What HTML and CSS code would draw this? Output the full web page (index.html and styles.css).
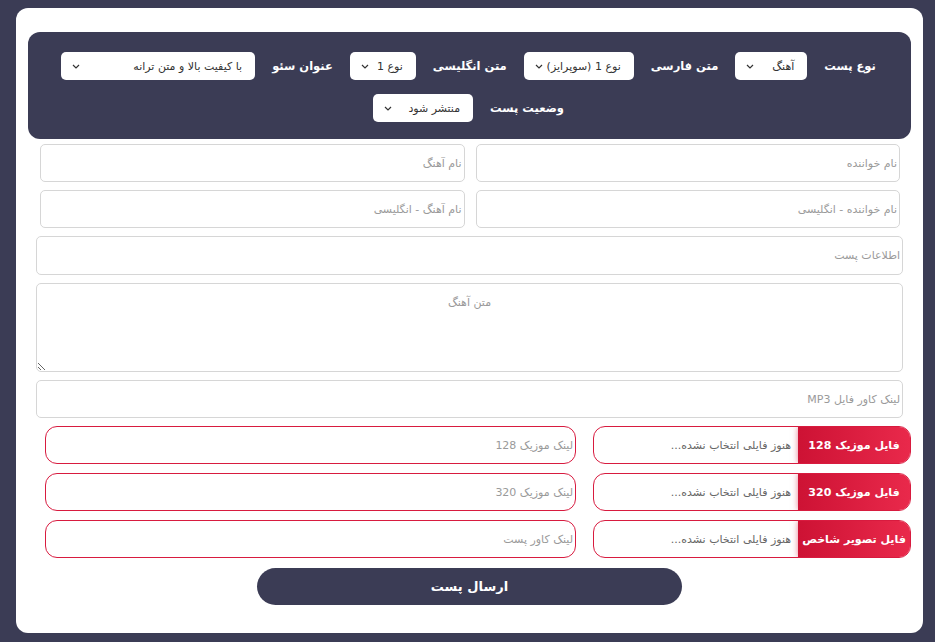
FILE: index.html
```html
<!DOCTYPE html>
<html lang="fa" dir="rtl">
<head>
    <meta charset="utf-8">
    <title>ارسال پست جدید</title>
    <link rel="stylesheet" href="styles.css">
</head>
<body>
    <div class="card">
        <!-- Post options -->
        <div class="options">
            <div class="options-row">
                <span class="opt-label">نوع پست</span>
                <div class="select w-72"><span>آهنگ</span><svg viewBox="0 0 8 5"><path d="M1 1l3 3 3-3"/></svg></div>
                <span class="opt-label">متن فارسی</span>
                <div class="select w-110"><span>نوع 1 (سوپرایز)</span><svg viewBox="0 0 8 5"><path d="M1 1l3 3 3-3"/></svg></div>
                <span class="opt-label">متن انگلیسی</span>
                <div class="select w-66"><span>نوع 1</span><svg viewBox="0 0 8 5"><path d="M1 1l3 3 3-3"/></svg></div>
                <span class="opt-label">عنوان سئو</span>
                <div class="select w-194"><span>با کیفیت بالا و متن ترانه</span><svg viewBox="0 0 8 5"><path d="M1 1l3 3 3-3"/></svg></div>
            </div>
            <div class="options-row">
                <span class="opt-label">وضعیت پست</span>
                <div class="select w-100"><span>منتشر شود</span><svg viewBox="0 0 8 5"><path d="M1 1l3 3 3-3"/></svg></div>
            </div>
        </div>

        <!-- Text fields -->
        <div class="pair">
            <input type="text" placeholder="نام خواننده">
            <input type="text" placeholder="نام آهنگ">
        </div>
        <div class="pair">
            <input type="text" placeholder="نام خواننده - انگلیسی">
            <input type="text" placeholder="نام آهنگ - انگلیسی">
        </div>
        <div class="full">
            <input type="text" class="tall" placeholder="اطلاعات پست">
            <textarea placeholder="متن آهنگ"></textarea>
            <input type="text" placeholder="لینک کاور فایل MP3">
        </div>

        <!-- Files -->
        <div class="files">
            <div class="file-field">
                <span class="file-btn">فایل موزیک 128</span>
                <span class="file-name">هنوز فایلی انتخاب نشده...</span>
            </div>
            <input type="text" class="link" placeholder="لینک موزیک 128">

            <div class="file-field">
                <span class="file-btn">فایل موزیک 320</span>
                <span class="file-name">هنوز فایلی انتخاب نشده...</span>
            </div>
            <input type="text" class="link" placeholder="لینک موزیک 320">

            <div class="file-field">
                <span class="file-btn">فایل تصویر شاخص</span>
                <span class="file-name">هنوز فایلی انتخاب نشده...</span>
            </div>
            <input type="text" class="link" placeholder="لینک کاور پست">
        </div>

        <button type="submit" class="submit">ارسال پست</button>
    </div>
</body>
</html>
```

FILE: styles.css
```css
body {
    font-family: "DejaVu Sans", sans-serif;
    margin: 0;
    padding: 8px 12px 0 16px;
    background-color: #3b3c55;
    direction: rtl;
}

.card {
    background-color: white;
    border-radius: 12px;
    padding: 24px 12px 28px;
}

/* header with selects */
.options {
    background-color: #3b3c55;
    border-radius: 12px;
    padding: 20px 0 17px;
    display: flex;
    flex-direction: column;
    gap: 14px;
}

.options-row {
    display: flex;
    justify-content: center;
    align-items: center;
    gap: 15px;
}

.opt-label {
    color: white;
    font-size: 11.5px;
    font-weight: bold;
    margin: 0 2px;
}

.select {
    height: 28px;
    background-color: white;
    border-radius: 5px;
    display: flex;
    align-items: center;
    justify-content: space-between;
    padding: 0 13px 0 11px;
    box-sizing: border-box;
    font-size: 11px;
    color: #333;
}

.select svg {
    width: 8px;
    height: 5px;
    fill: none;
    stroke: #333;
    stroke-width: 1.2;
}

.w-72 { width: 72px; }
.w-110 { width: 110px; }
.w-66 { width: 66px; }
.w-194 { width: 194px; }
.w-100 { width: 100px; }

/* text inputs */
input[type="text"],
textarea {
    font-family: inherit;
    font-size: 11px;
    border: 1px solid #d6d6d6;
    border-radius: 5px;
    padding: 0 2px;
    box-sizing: border-box;
    height: 38px;
    width: 100%;
    margin: 0;
    color: #333;
    background: white;
}

input::placeholder,
textarea::placeholder {
    color: #9a9a9a;
}

input[type="text"]:focus,
textarea:focus {
    outline: none;
}

.pair {
    display: flex;
    gap: 11px;
    padding: 0 11px 0 12px;
    margin-top: 5px;
}

.pair + .pair {
    margin-top: 8px;
}

.pair:first-of-type input {
    height: 39px;
}

.full {
    display: flex;
    flex-direction: column;
    gap: 8px;
    padding: 0 8px;
    margin-top: 8px;
}

.full .tall {
    height: 39px;
}

textarea {
    height: 89px;
    text-align: center;
    padding-top: 12px;
    resize: vertical;
}

/* file pickers */
.files {
    display: grid;
    grid-template-columns: 318px 1fr;
    column-gap: 17px;
    row-gap: 9px;
    padding-left: 17px;
    margin-top: 8px;
}

.file-field {
    display: flex;
    align-items: center;
    height: 38px;
    border: 1px solid #d81b3f;
    border-radius: 12px;
    overflow: hidden;
    box-sizing: border-box;
}

.file-btn {
    width: 112px;
    height: 100%;
    display: flex;
    align-items: center;
    justify-content: center;
    background: linear-gradient(to left, #e9294b, #cd1234);
    box-shadow: 0 0 6px rgba(208, 20, 55, 0.55);
    color: white;
    font-size: 11px;
    font-weight: bold;
    white-space: nowrap;
}

.file-name {
    margin-right: 7px;
    font-size: 11px;
    color: #666;
}

.files input.link {
    border-color: #d81b3f;
    border-radius: 12px;
}

.submit {
    display: block;
    margin: 10px auto 0;
    width: 425px;
    height: 37px;
    background-color: #3b3c55;
    color: white;
    border: none;
    border-radius: 19px;
    font-family: inherit;
    font-size: 13px;
    font-weight: bold;
    cursor: pointer;
}
```
